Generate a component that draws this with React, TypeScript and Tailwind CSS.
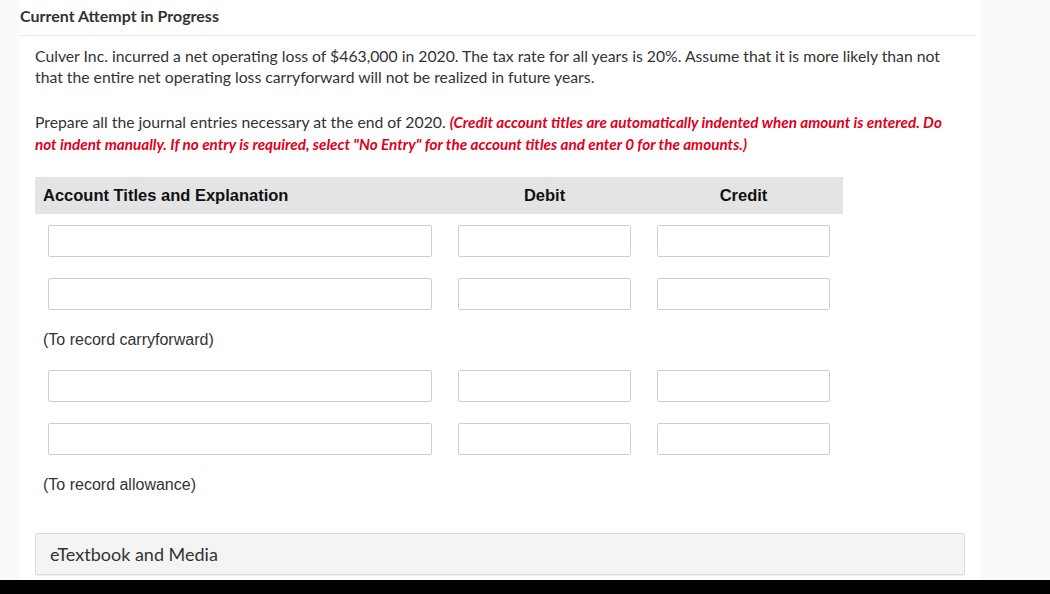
import React from "react";

// One journal entry line: title, debit, credit inputs
const EntryRow: React.FC = () => (
  <div className="flex h-[53px] items-center">
    <div className="w-[410px] px-[13px]">
      <input type="text" className="block h-[32px] w-full rounded-[2px] border border-[#cfcfcf] bg-white" />
    </div>
    <div className="w-[199px] px-[13px]">
      <input type="text" className="block h-[32px] w-full rounded-[2px] border border-[#cfcfcf] bg-white" />
    </div>
    <div className="w-[199px] px-[13px]">
      <input type="text" className="block h-[32px] w-full rounded-[2px] border border-[#cfcfcf] bg-white" />
    </div>
  </div>
);

const Explanation: React.FC<{ text: string }> = ({ text }) => (
  <div className="flex h-[39px] items-center pl-[8px] text-[16px] text-[#333] font-['Liberation_Sans',Arial,sans-serif]">
    {text}
  </div>
);

export default function App() {
  return (
    <div className="flex h-[594px] w-full flex-col bg-[#fafafa] font-['Lato',sans-serif]">
      <div className="flex flex-1 overflow-hidden">
        <div className="ml-[20px] w-[960px] bg-white">
          <div className="mr-[5px] flex h-[36px] items-center border-b border-[#e8e8e8] pb-[3px] text-[16px] font-bold text-[#333]">
            Current Attempt in Progress
          </div>

          <div className="px-[15px] pt-[9px]">
            <p className="w-[915px] text-[15.75px] leading-[21px] text-[#333]">
              Culver Inc. incurred a net operating loss of $463,000 in 2020. The tax rate for all years is 20%. Assume that it is more likely than not that the entire net operating loss carryforward will not be realized in future years.
            </p>
            <p className="mt-[24px] w-[925px] text-[15.75px] leading-[21px] text-[#333]">
              Prepare all the journal entries necessary at the end of 2020.{" "}
              <span className="text-[15.25px] font-bold italic text-[#e0001b]">
                (Credit account titles are automatically indented when amount is entered. Do not indent manually. If no entry is required, select "No Entry" for the account titles and enter 0 for the amounts.)
              </span>
            </p>

            <div className="mt-[22px] w-[808px]">
              <div className="flex h-[37px] items-center bg-[#e4e4e4] text-[16.5px] font-bold text-[#111] font-['Liberation_Sans',Arial,sans-serif]">
                <div className="w-[410px] pl-[8px]">Account Titles and Explanation</div>
                <div className="w-[199px] text-center">Debit</div>
                <div className="w-[199px] text-center">Credit</div>
              </div>
              <EntryRow />
              <EntryRow />
              <Explanation text="(To record carryforward)" />
              <EntryRow />
              <EntryRow />
              <Explanation text="(To record allowance)" />
            </div>

            <div className="mt-[29px] flex h-[42px] w-[930px] items-center rounded-[2px] border border-[#dcdcdc] bg-[#f4f4f4] pl-[14px] text-[18px] text-[#333] shadow-[0_1px_1px_rgba(0,0,0,0.06)]">
              eTextbook and Media
            </div>
          </div>
        </div>
      </div>
      <div className="h-[14px] w-full bg-black" />
    </div>
  );
}
